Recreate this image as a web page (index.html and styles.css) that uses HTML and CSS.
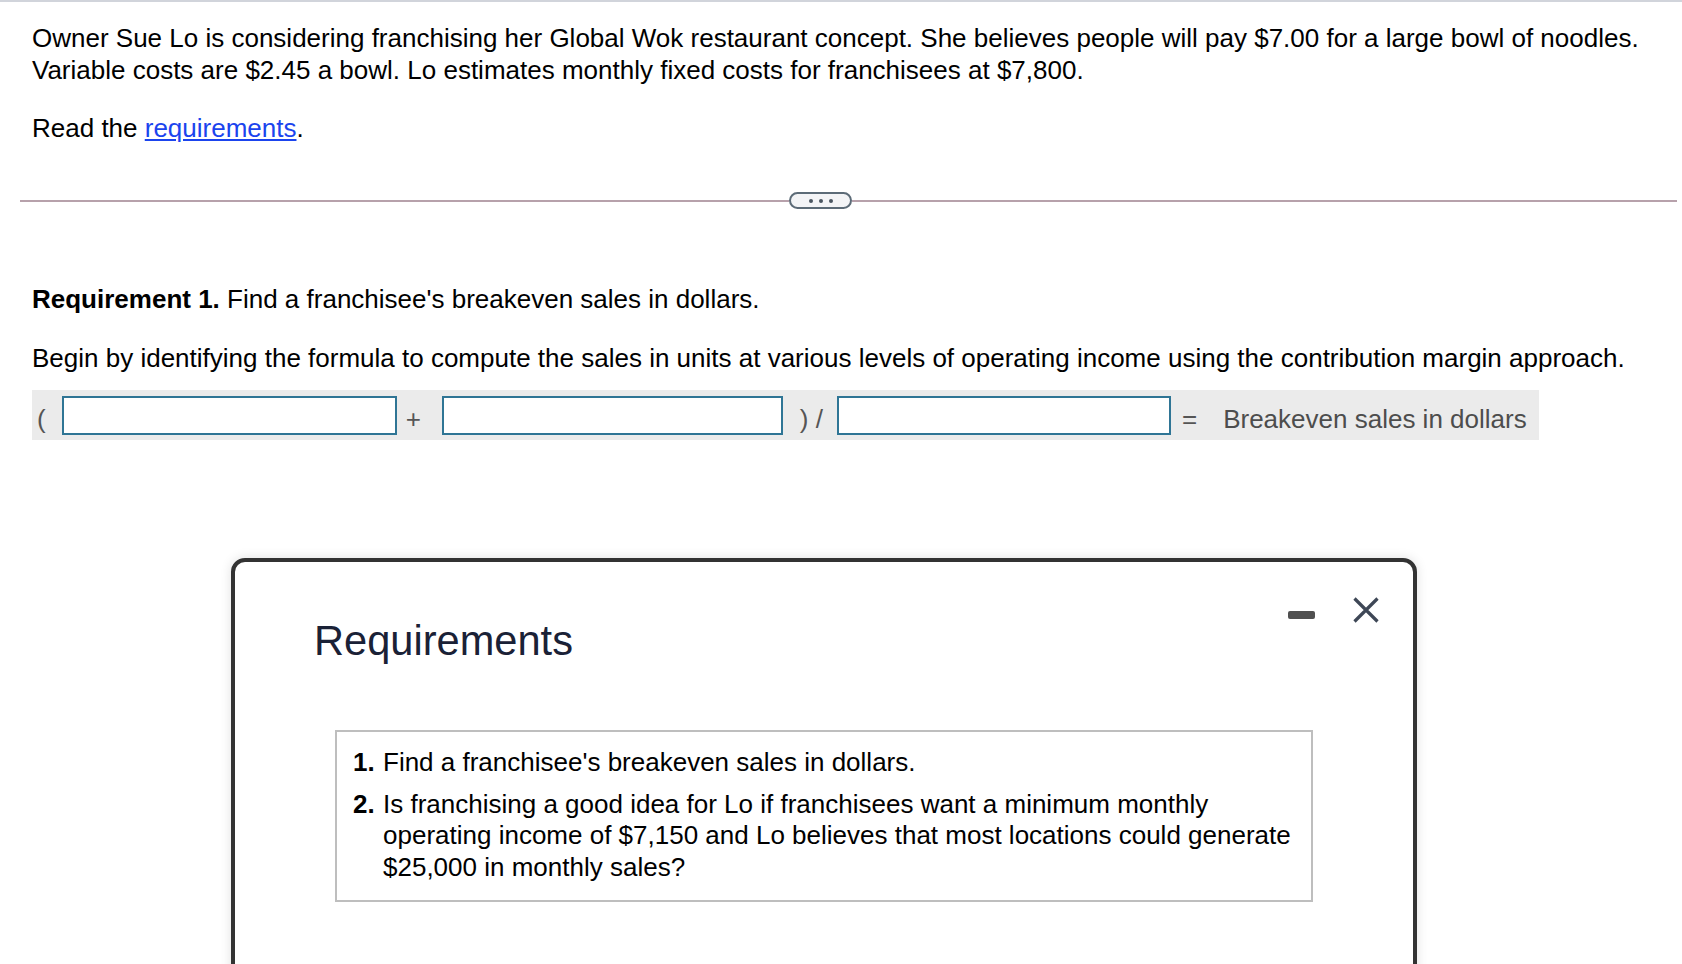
FILE: index.html
```html
<!DOCTYPE html>
<html>
<head>
<meta charset="utf-8">
<title>Global Wok</title>
<link rel="stylesheet" href="styles.css">
</head>
<body>
<div class="topbar"></div>
<div class="content">
  <p class="intro">Owner Sue Lo is considering franchising her Global Wok restaurant concept. She believes people will pay $7.00 for a large bowl of noodles.<br>Variable costs are $2.45 a bowl. Lo estimates monthly fixed costs for franchisees at $7,800.</p>
  <p class="read">Read the <a class="link" href="#">requirements</a>.</p>
</div>
<div class="divider">
  <div class="line line-left"></div>
  <div class="pill"><span class="dot"></span><span class="dot"></span><span class="dot"></span></div>
  <div class="line line-right"></div>
</div>
<div class="content">
  <p class="req"><b>Requirement 1.</b> Find a franchisee's breakeven sales in dollars.</p>
  <p class="begin">Begin by identifying the formula to compute the sales in units at various levels of operating income using the contribution margin approach.</p>
  <div class="formula">
    <span class="tok tok-open">(</span>
    <input class="box box1" type="text">
    <span class="tok tok-plus">+</span>
    <input class="box box2" type="text">
    <span class="tok tok-div">)&nbsp;/</span>
    <input class="box box3" type="text">
    <span class="tok tok-eq">=</span>
    <span class="tok tok-label">Breakeven sales in dollars</span>
  </div>
</div>

<div class="modal">
  <div class="modal-head">
    <h2 class="modal-title">Requirements</h2>
    <div class="controls">
      <span class="minimize"></span>
      <svg class="close" width="26" height="26" viewBox="0 0 26 26"><path d="M1.5 1.5 L24.5 24.5 M24.5 1.5 L1.5 24.5" stroke="#3e4756" stroke-width="3.2" fill="none"/></svg>
    </div>
  </div>
  <div class="req-box">
    <div class="item item1"><span class="num">1.</span><span class="txt">Find a franchisee's breakeven sales in dollars.</span></div>
    <div class="item item2"><span class="num">2.</span><span class="txt">Is franchising a good idea for Lo if franchisees want a minimum monthly<br>operating income of $7,150 and Lo believes that most locations could generate<br>$25,000 in monthly sales?</span></div>
  </div>
</div>
</body>
</html>
```

FILE: styles.css
```css
html, body {
  margin: 0;
  padding: 0;
  overflow: hidden;
  height: 100%;
  background: #ffffff;
}
body {
  font-family: "Liberation Sans", Arial, Helvetica, sans-serif;
  font-size: 26px;
  line-height: 32px;
  color: #000000;
  position: relative;
}
.topbar {
  height: 2px;
  background: #d1d4db;
}
.content {
  padding: 0 0 0 32px;
}
.content p {
  margin: 0;
  white-space: nowrap;
}
.intro {
  padding-top: 20px;
}
.read {
  padding-top: 26px;
}
.link {
  color: #1b44ee;
  text-decoration: underline;
}
.divider {
  display: flex;
  align-items: center;
  margin: 48px 5px 0 20px;
  height: 17px;
}
.line {
  height: 2px;
  background: #b7a1ab;
}
.line-left {
  width: 769px;
}
.line-right {
  flex: 1;
}
.pill {
  box-sizing: border-box;
  width: 63px;
  height: 17px;
  border: 2px solid #5c6b77;
  border-radius: 9px;
  background: #f3f4f6;
  display: flex;
  align-items: center;
  justify-content: center;
  gap: 6px;
}
.dot {
  width: 4px;
  height: 4px;
  border-radius: 50%;
  background: #4b5661;
}
.content .req {
  padding-top: 74px;
}
.content .begin {
  padding-top: 27px;
}
.formula {
  margin-top: 16px;
  box-sizing: border-box;
  width: 1507px;
  height: 50px;
  padding: 6px 0 5px 5px;
  background: #ebebeb;
  display: flex;
  align-items: center;
  color: #555555;
}
.tok {
  white-space: nowrap;
  padding-top: 6px;
}
.box {
  box-sizing: border-box;
  height: 39px;
  border: 2px solid #2f7595;
  background: #ffffff;
  margin: 0;
  padding: 0 6px;
  font: inherit;
  outline: none;
}
.box1 { width: 335px; margin-left: 16px; }
.tok-plus { margin-left: 9px; }
.box2 { width: 341px; margin-left: 21px; }
.tok-div { margin-left: 17px; }
.box3 { width: 334px; margin-left: 14px; }
.tok-eq { margin-left: 11px; }
.tok-label { margin-left: 26px; color: #4d4d4d; }

.modal {
  position: absolute;
  left: 231px;
  top: 558px;
  width: 1186px;
  height: 520px;
  box-sizing: border-box;
  border: 4px solid #333333;
  border-radius: 14px;
  background: #ffffff;
  box-shadow: 0 0 12px rgba(0, 0, 0, 0.12);
}
.modal-head {
  display: flex;
  justify-content: space-between;
  align-items: flex-start;
}
.modal-title {
  margin: 55px 0 0 79px;
  font-size: 41.6px;
  line-height: 48px;
  font-weight: normal;
  color: #1a2136;
}
.controls {
  display: flex;
  align-items: flex-start;
  margin: 35px 34px 0 0;
}
.minimize {
  display: block;
  width: 27px;
  height: 8px;
  margin-top: 14px;
  margin-right: 38px;
  border-radius: 2px;
  background: #505050;
}
.close {
  display: block;
}
.req-box {
  margin: 65px 100px 0 100px;
  border: 2px solid #bebebe;
  padding: 15px 16px 17px 16px;
  line-height: 31.5px;
}
.item {
  display: flex;
}
.item2 {
  margin-top: 10px;
}
.num {
  width: 30px;
  flex: none;
  font-weight: bold;
}
.txt {
  white-space: nowrap;
}
```
